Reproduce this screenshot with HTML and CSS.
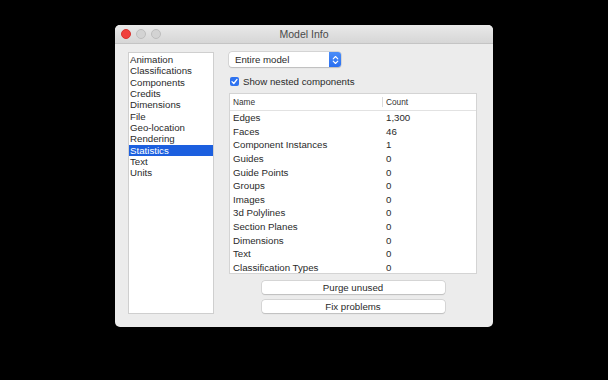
FILE: index.html
```html
<!DOCTYPE html>
<html lang="en">
<head>
<meta charset="UTF-8">
<meta name="viewport" content="width=device-width, initial-scale=1.0">
<title>Model Info</title>
<link rel="stylesheet" href="styles.css">
</head>
<body>

<div class="window">
  <div class="titlebar">
    <div class="lights">
      <span class="light close"></span>
      <span class="light"></span>
      <span class="light"></span>
    </div>
    <div class="title">Model Info</div>
  </div>

  <div class="content">
    <ul class="sidebar">
      <li>Animation</li>
      <li>Classifications</li>
      <li>Components</li>
      <li>Credits</li>
      <li>Dimensions</li>
      <li>File</li>
      <li>Geo-location</li>
      <li>Rendering</li>
      <li class="selected">Statistics</li>
      <li>Text</li>
      <li>Units</li>
    </ul>

    <div class="panel">
      <div class="popup">
        <span class="popup-label">Entire model</span>
        <span class="popup-arrows">
          <svg width="7" height="10" viewBox="0 0 7 10">
            <path d="M1.2 3.8 L3.5 1.5 L5.8 3.8 M1.2 6.2 L3.5 8.5 L5.8 6.2" fill="none" stroke="#fff" stroke-width="1.1" stroke-linecap="round" stroke-linejoin="round"/>
          </svg>
        </span>
      </div>

      <label class="check-row">
        <span class="checkbox">
          <svg width="9" height="9" viewBox="0 0 9 9">
            <path d="M2 4.6 L3.8 6.5 L7 2.4" fill="none" stroke="#fff" stroke-width="1.3" stroke-linecap="round" stroke-linejoin="round"/>
          </svg>
        </span>
        Show nested components
      </label>

      <div class="stats">
        <div class="stats-head">
          <span class="col-name">Name</span>
          <span class="col-count">Count</span>
        </div>
        <div class="row"><span class="col-name">Edges</span><span class="col-count">1,300</span></div>
        <div class="row"><span class="col-name">Faces</span><span class="col-count">46</span></div>
        <div class="row"><span class="col-name">Component Instances</span><span class="col-count">1</span></div>
        <div class="row"><span class="col-name">Guides</span><span class="col-count">0</span></div>
        <div class="row"><span class="col-name">Guide Points</span><span class="col-count">0</span></div>
        <div class="row"><span class="col-name">Groups</span><span class="col-count">0</span></div>
        <div class="row"><span class="col-name">Images</span><span class="col-count">0</span></div>
        <div class="row"><span class="col-name">3d Polylines</span><span class="col-count">0</span></div>
        <div class="row"><span class="col-name">Section Planes</span><span class="col-count">0</span></div>
        <div class="row"><span class="col-name">Dimensions</span><span class="col-count">0</span></div>
        <div class="row"><span class="col-name">Text</span><span class="col-count">0</span></div>
        <div class="row"><span class="col-name">Classification Types</span><span class="col-count">0</span></div>
      </div>

      <div class="actions">
        <button type="button">Purge unused</button>
        <button type="button">Fix problems</button>
      </div>
    </div>
  </div>
</div>

</body>
</html>
```

FILE: styles.css
```css
body {
  margin: 0;
  padding: 25px 0 0 115px;
  background-color: #000;
  font-family: "Liberation Sans", Arial, sans-serif;
  color: #2a2a2a;
  height: 380px;
  box-sizing: border-box;
}

.window {
  width: 378px;
  height: 302px;
  background-color: #ececec;
  border-radius: 5px;
  overflow: hidden;
  display: flex;
  flex-direction: column;
}

.titlebar {
  height: 18px;
  background: linear-gradient(#e9e9e9, #d6d6d6);
  border-bottom: 1px solid #c4c4c4;
  display: flex;
  align-items: center;
  position: relative;
}

.lights {
  display: flex;
  gap: 5px;
  padding-left: 6px;
}

.light {
  width: 8px;
  height: 8px;
  border-radius: 50%;
  background-color: #d3d3d3;
  border: 0.5px solid #bdbdbd;
}

.light.close {
  background-color: #f0403d;
  border-color: #d83430;
}

.title {
  position: absolute;
  left: 0;
  right: 0;
  text-align: center;
  font-size: 10.5px;
  color: #4a4a4a;
}

.content {
  flex: 1;
  display: flex;
  padding: 8px 16px 13px 13px;
  gap: 15px;
}

.sidebar {
  list-style: none;
  margin: 0;
  padding: 1px 0 0;
  width: 84px;
  background-color: #fff;
  border: 1px solid #cfcfcf;
  font-size: 9.7px;
}

.sidebar li {
  height: 11.35px;
  line-height: 11.35px;
  padding-left: 1px;
}

.sidebar li.selected {
  background-color: #1c5fdf;
  color: #fff;
}

.panel {
  flex: 1;
  display: flex;
  flex-direction: column;
}

.popup {
  width: 112px;
  height: 15px;
  background-color: #fff;
  border-radius: 3px;
  box-shadow: 0 0 0 0.5px #c2c2c2, 0 0.5px 1px rgba(0, 0, 0, 0.2);
  display: flex;
  font-size: 9.7px;
}

.popup-label {
  flex: 1;
  line-height: 15px;
  padding-left: 6px;
}

.popup-arrows {
  width: 12px;
  background: linear-gradient(#4a8df8, #2a6ff0);
  border-radius: 0 3px 3px 0;
  display: flex;
  align-items: center;
  justify-content: center;
}

.check-row {
  display: flex;
  align-items: center;
  gap: 4px;
  margin-top: 9px;
  height: 10px;
  font-size: 9.7px;
}

.checkbox {
  width: 9px;
  height: 9px;
  border-radius: 2px;
  background-color: #2f73f0;
  display: flex;
  margin-left: 1px;
}

.stats {
  margin-top: 7px;
  height: 181px;
  background-color: #fff;
  border: 1px solid #d4d4d4;
  box-sizing: border-box;
  font-size: 9.7px;
}

.stats-head {
  height: 16px;
  display: flex;
  align-items: center;
  border-bottom: 1px solid #e2e2e2;
  font-size: 8.3px;
  color: #333;
}

.stats-head .col-count {
  border-left: 1px solid #dcdcdc;
  padding-left: 3px;
  margin-left: -4px;
}

.row {
  height: 13.6px;
  display: flex;
  align-items: center;
}

.col-name {
  width: 153px;
  padding-left: 3px;
}

.col-count {
  flex: 1;
}

.actions {
  display: flex;
  flex-direction: column;
  align-items: center;
  gap: 6px;
  margin-top: 7px;
}

.actions button {
  width: 183px;
  height: 13px;
  padding: 0;
  background-color: #fff;
  border: none;
  border-radius: 3px;
  box-shadow: 0 0 0 0.5px #c4c4c4, 0 0.5px 1px rgba(0, 0, 0, 0.2);
  font-family: "Liberation Sans", Arial, sans-serif;
  font-size: 9.7px;
  color: #2a2a2a;
}
```
